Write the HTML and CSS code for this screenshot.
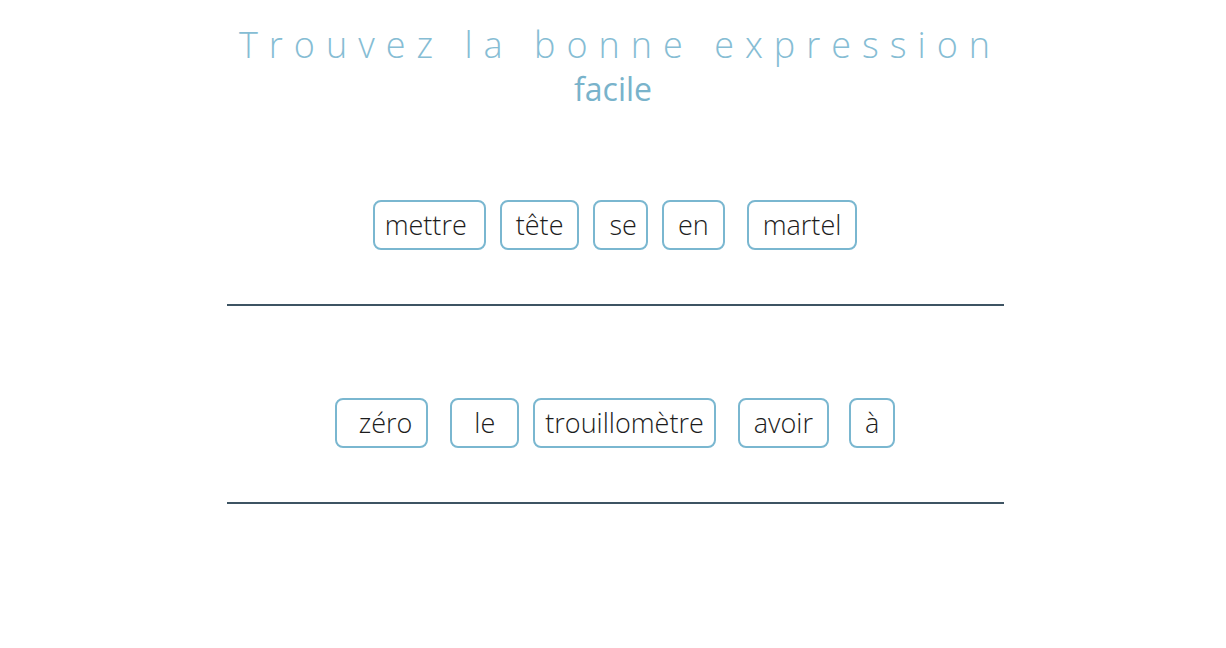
FILE: index.html
```html
<!DOCTYPE html>
<html lang="fr">

<head>
    <meta charset="UTF-8">
    <meta name="viewport" content="width=device-width, initial-scale=1.0">
    <title>Trouvez la bonne expression</title>
    <link rel="stylesheet" href="styles.css">
</head>

<body>
    <header class="titre">
        <h1>Trouvez la bonne expression</h1>
        <h2>facile</h2>
    </header>

    <main class="jeu">
        <section class="ligne">
            <div class="mots">
                <span class="mot serre-g">mettre</span>
                <span class="mot">tête</span>
                <span class="mot serre-d">se</span>
                <span class="mot">en</span>
                <span class="mot loin">martel</span>
            </div>
            <hr>
        </section>

        <section class="ligne">
            <div class="mots">
                <span class="mot large-g">zéro</span>
                <span class="mot loin large">le</span>
                <span class="mot serre">trouillomètre</span>
                <span class="mot loin">avoir</span>
                <span class="mot proche">à</span>
            </div>
            <hr>
        </section>
    </main>
</body>

</html>
```

FILE: styles.css
```css
* {
    margin: 0;
    padding: 0;
    box-sizing: border-box;
    font-family: "Open Sans", "Noto Sans", sans-serif;
}

body {
    background-color: #ffffff;
    color: #1c1c1c;
}

.titre {
    text-align: center;
    padding-top: 22px;
}

.titre h1 {
    font-weight: 300;
    font-size: 36px;
    letter-spacing: 11px;
    color: #86bdd4;
    line-height: 46px;
    margin-left: 14px;
}

.titre h2 {
    font-weight: 400;
    font-size: 32px;
    color: #79b3cb;
    line-height: 42px;
}

.jeu {
    width: 777px;
    margin: 0 auto;
    padding-top: 90px;
    position: relative;
    left: 2px;
}

.ligne {
    padding-bottom: 92px;
}

.mots {
    display: flex;
    justify-content: center;
    gap: 14px;
    margin-bottom: 54px;
}

.mot {
    display: inline-block;
    height: 50px;
    line-height: 46px;
    padding: 0 14px;
    border: 2px solid #7ab7d0;
    border-radius: 8px;
    font-size: 27px;
    font-weight: 300;
}

.serre-g {
    padding-left: 10px;
    padding-right: 17px;
}

.serre-d {
    padding-right: 9px;
}

.serre {
    padding: 0 10px;
}

.large {
    padding: 0 22px;
}

.large-g {
    padding-left: 22px;
}

.loin {
    margin-left: 8px;
}

.proche {
    margin-left: 6px;
}

hr {
    border: none;
    height: 2px;
    background-color: #3e5463;
}
```
